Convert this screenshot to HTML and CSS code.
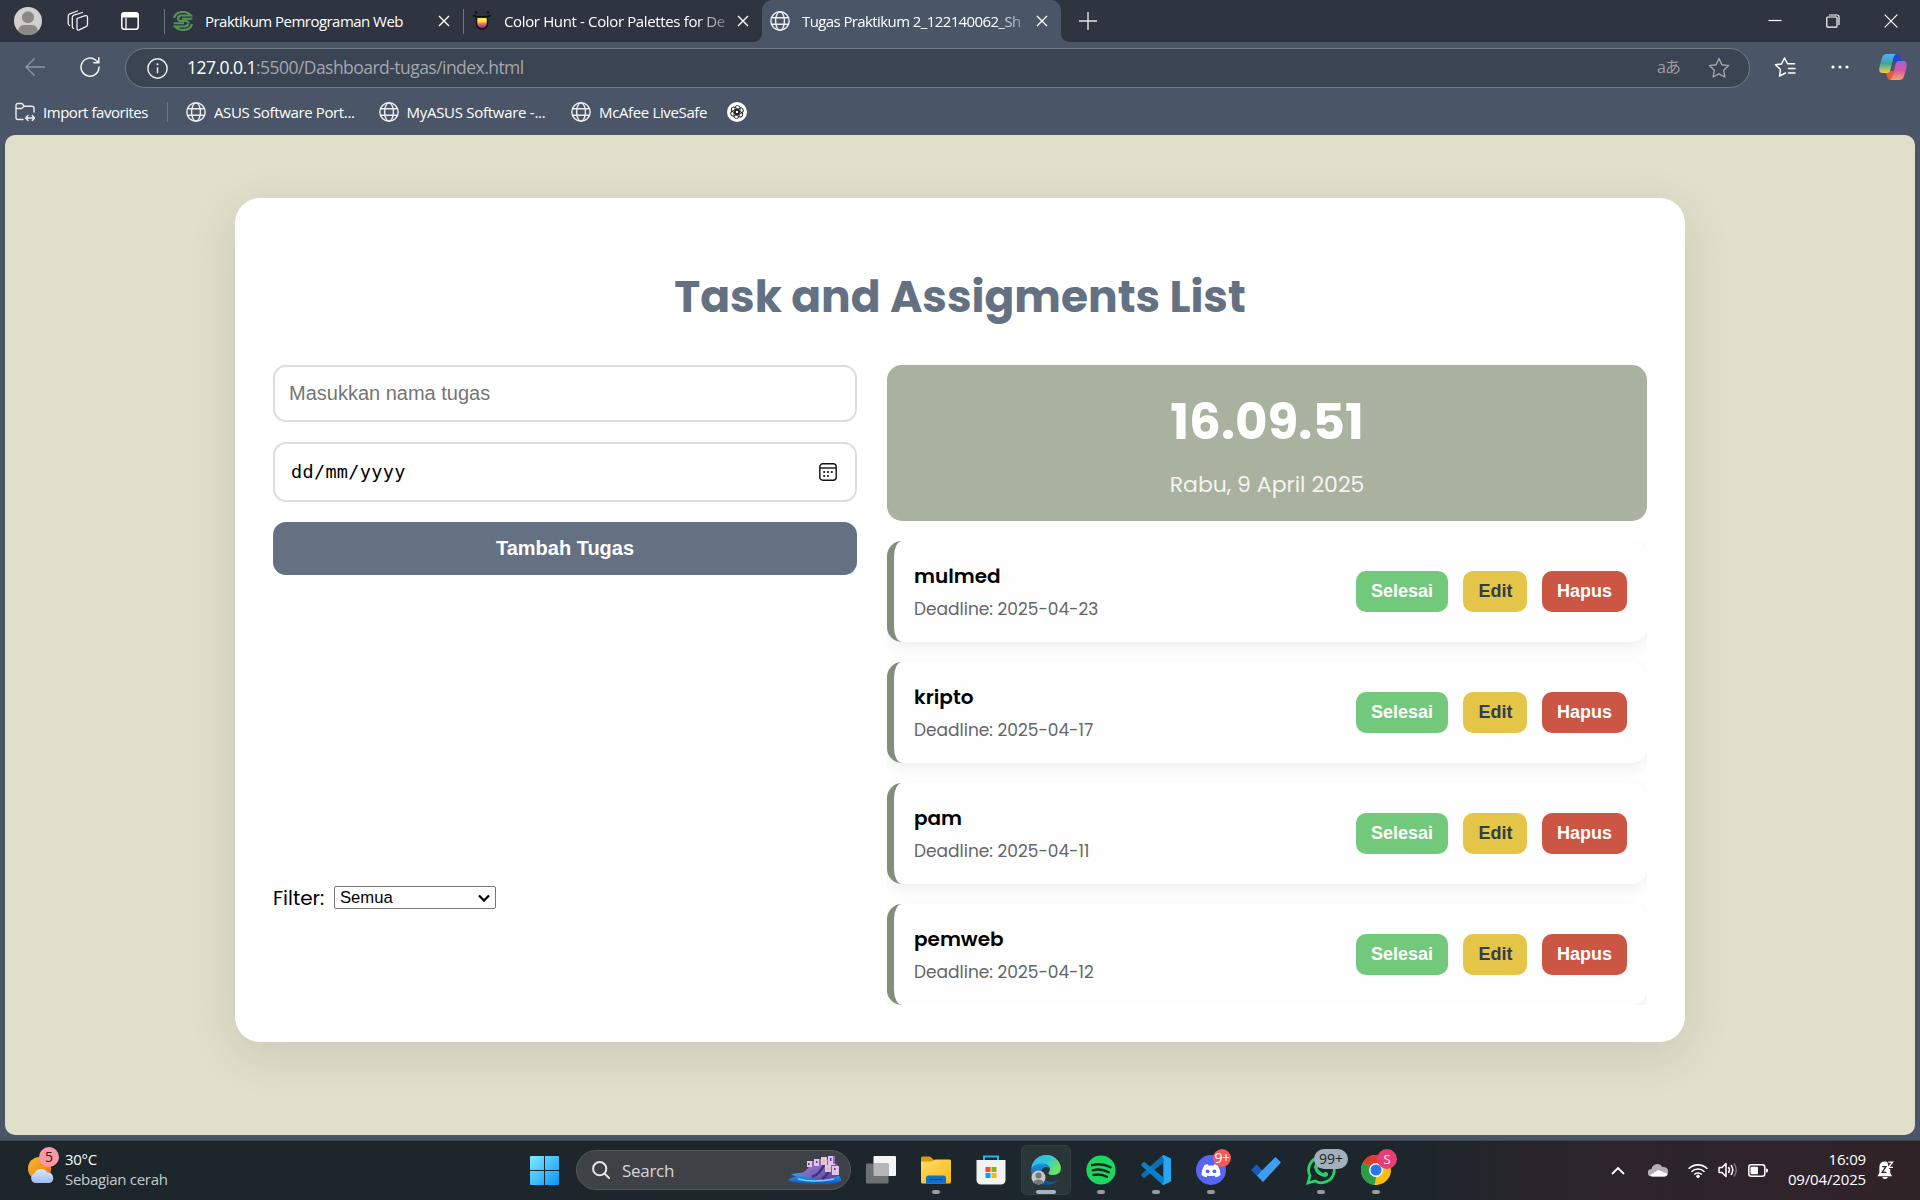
FILE: index.html
```html
<!DOCTYPE html>
<html lang="id">
<head>
<meta charset="utf-8">
<title>Tugas Praktikum 2_122140062_Sh</title>
<link rel="stylesheet" href="styles.css">
</head>
<body>
<svg class="defs" width="0" height="0" aria-hidden="true">
  <defs>
    <symbol id="globe" viewBox="0 0 20 20"><g fill="none" stroke="currentColor" stroke-width="1.4"><circle cx="10" cy="10" r="9.2"/><ellipse cx="10" cy="10" rx="4.4" ry="9.2"/><path d="M1.5 6.8h17M1.5 13.2h17"/></g></symbol>
    <symbol id="x" viewBox="0 0 12 12"><path d="M1 1l10 10M11 1L1 11" fill="none" stroke="currentColor" stroke-width="1.4"/></symbol>
    <linearGradient id="gWin" x1="0" y1="0" x2="1" y2="1"><stop offset="0" stop-color="#7cecff"/><stop offset="1" stop-color="#0a93fb"/></linearGradient>
    <linearGradient id="gSun" x1="0" y1="0" x2="1" y2="1"><stop offset="0" stop-color="#f5c12e"/><stop offset="1" stop-color="#f06a16"/></linearGradient>
    <linearGradient id="gCloud" x1="0" y1="0" x2="0" y2="1"><stop offset="0" stop-color="#d9e8fb"/><stop offset="1" stop-color="#9cbcf2"/></linearGradient>
    <linearGradient id="gFold" x1="0" y1="0" x2="1" y2="1"><stop offset="0" stop-color="#ffdc6b"/><stop offset="1" stop-color="#fbb813"/></linearGradient>
    <linearGradient id="gEdge" x1="0" y1="0" x2="1" y2=".5"><stop offset="0" stop-color="#35b8e8"/><stop offset=".5" stop-color="#2fc6d8"/><stop offset="1" stop-color="#6fe45f"/></linearGradient>
    <linearGradient id="gEdge2" x1="0" y1="0" x2="0" y2="1"><stop offset="0" stop-color="#1c93dd"/><stop offset="1" stop-color="#0f4f9e"/></linearGradient>
    <linearGradient id="gCopA" x1="0" y1="0" x2="0" y2="1"><stop offset="0" stop-color="#4fb0f5"/><stop offset=".5" stop-color="#3fa5a0"/><stop offset="1" stop-color="#f0cf3a"/></linearGradient>
    <linearGradient id="gCopB" x1="0" y1="0" x2="0" y2="1"><stop offset="0" stop-color="#a05ae8"/><stop offset=".5" stop-color="#d9589c"/><stop offset="1" stop-color="#f5a565"/></linearGradient>
    <linearGradient id="gHunt" x1="0" y1="0" x2="0" y2="1"><stop offset=".45" stop-color="#fbe74f"/><stop offset=".46" stop-color="#f7a34b"/><stop offset=".6" stop-color="#f0655f"/><stop offset=".85" stop-color="#7b3fa0"/></linearGradient>
    <linearGradient id="gSea" x1="0" y1="0" x2="0" y2="1"><stop offset="0" stop-color="#35a4f2"/><stop offset="1" stop-color="#1253c4"/></linearGradient>
    <linearGradient id="gRock" x1="0" y1="0" x2="1" y2="1"><stop offset="0" stop-color="#a58fe0"/><stop offset="1" stop-color="#5b3f9b"/></linearGradient>
  </defs>
</svg>

<header class="tabbar">
  <svg class="avatar" viewBox="0 0 28 28"><circle cx="14" cy="14" r="14" fill="#d2d0ce"/><circle cx="14" cy="10.3" r="6" fill="#8b8987"/><path d="M4.200 24c.3-4 3-6 6-6h7.600c3 0 5.700 2 6 6A14 14 0 0 1 4.200 24z" fill="#8b8987"/></svg>
  <svg class="workspaces" viewBox="0 0 22 22" fill="none" stroke="#eee" stroke-width="1.300" stroke-linejoin="round" stroke-linecap="round"><path d="M10 8.500l7.500-2.700q3-.8 3 1.500v7.200q0 1.500-1.500 2.100l-6.700 3.300q-2.300.9-2.300-1.500z"/><path d="M6.500 18.500q-1.200-.5-1.200-2V7.500q0-1.600 1.500-2.300L15.500 2.500"/><path d="M2.500 15.500q-1.300-.6-1.300-2V6q0-1.500 1.500-2.200L10.500 1"/></svg>
  <svg class="tabmenu" viewBox="0 0 18 18"><rect x=".8" y=".8" width="16.400" height="16.400" rx="2.500" fill="none" stroke="#fff" stroke-width="1.500"/><path d="M1 2.500Q1 1 3 1h12q2 0 2 1.500V5.500H1z" fill="#fff"/><path d="M5 6v11" stroke="#fff" stroke-width="1.300"/></svg>
  <i class="tabsep first"></i>
  <div class="tab tab-a">
    <svg class="fav" viewBox="0 0 20 20" fill="none" stroke="#549459"><path d="M1 7Q2.500 1 10 1q5 0 8 3.500H8.500Q5 4.500 5 7.200T8 10h5q2.500 0 2.500 2.500" stroke-width="2.200"/><path d="M19 13q-1.500 6-9 6-5 0-8-3.500h9.500q3.500 0 3.500-2.700" stroke-width="2.200"/><path d="M19.300 7.700H9M.7 12.300H11" stroke-width="2"/></svg>
    <span class="tabtext t1">Praktikum Pemrograman Web</span>
    <svg class="close"><use href="#x"/></svg>
  </div>
  <i class="tabsep"></i>
  <div class="tab tab-b">
    <svg class="fav" viewBox="0 0 20 20"><path d="M4.500 6h11v6.500a5.500 5.500 0 0 1-11 0z" fill="url(#gHunt)" stroke="#111" stroke-width="1.500"/><path d="M1 4.500Q4 6 10 6t9-1.500" fill="none" stroke="#111" stroke-width="1.500"/><circle cx="4" cy="1.500" r="1.300" fill="#111"/><circle cx="16" cy="1.500" r="1.300" fill="#111"/></svg>
    <span class="tabtext t2">Color Hunt - Color Palettes for De</span>
    <svg class="close"><use href="#x"/></svg>
  </div>
  <div class="tab active">
    <svg class="fav"><use href="#globe"/></svg>
    <span class="tabtext t3">Tugas Praktikum 2_122140062_Sh</span>
    <svg class="close"><use href="#x"/></svg>
  </div>
  <svg class="plus" viewBox="0 0 18 18"><path d="M9 0v18M0 9h18" stroke="#e5e5e5" stroke-width="1.400"/></svg>
  <div class="wincontrols">
    <svg viewBox="0 0 14 14"><path d="M.5 6.500h13" stroke="#fff" stroke-width="1.200"/></svg>
    <svg viewBox="0 0 14 14" fill="none" stroke="#fff" stroke-width="1.200"><rect x=".8" y="3" width="10.200" height="10.200" rx="1"/><path d="M3 1h8q2 0 2 2v8"/></svg>
    <svg viewBox="0 0 14 14"><path d="M.7.7l12.600 12.600M13.300.7L.7 13.300" stroke="#fff" stroke-width="1.200"/></svg>
  </div>
</header>

<nav class="toolbar">
  <svg class="back" viewBox="0 0 20 20" fill="none" stroke="#8d95a2" stroke-width="1.400"><path d="M20 10H1M9.500 1.500L1 10l8.500 8.500"/></svg>
  <svg class="reload" viewBox="0 0 20 20" fill="none" stroke="#f3f3f3" stroke-width="1.500" stroke-linecap="round"><path d="M19 10A9 9 0 1 1 15.500 3L18.500 5.500M18.800.8v5h-5"/></svg>
  <div class="address">
    <svg class="info" viewBox="0 0 20 20"><circle cx="10" cy="10" r="9.200" fill="none" stroke="#eee" stroke-width="1.400"/><path d="M10 8.800v5.700" stroke="#eee" stroke-width="1.400"/><circle cx="10" cy="6" r="1" fill="#eee"/></svg>
    <span class="url"><b>127.0.0.1</b>:5500/Dashboard-tugas/index.html</span>
    <span class="translate">aあ</span>
    <svg class="star" viewBox="0 0 22 22"><path d="M11 1.500l2.900 6.200 6.700.9-4.900 4.700 1.200 6.700L11 16.800 5.100 20l1.200-6.700L1.400 8.600l6.700-.9z" fill="none" stroke="#a5a5a5" stroke-width="1.400" stroke-linejoin="round"/></svg>
  </div>
  <svg class="favs" viewBox="0 0 22 22" fill="none" stroke="#fff" stroke-width="1.500" stroke-linejoin="round" stroke-linecap="round"><path d="M11.500 17L5.500 20l1-6.500L1.500 8.800l6-.9L10.500 2l3 5.700h7M14.500 12.500h6.500M14.500 17h6.500"/></svg>
  <svg class="dots" viewBox="0 0 18 4" fill="#fff"><circle cx="2" cy="2" r="1.600"/><circle cx="9" cy="2" r="1.600"/><circle cx="16" cy="2" r="1.600"/></svg>
  <svg class="copilot" viewBox="0 0 28 28"><path d="M14 1h4q2.500 0 3.500 4l1 3.500h-4q-3.500 0-4.500 4z" fill="#2447cf"/><path d="M6 18h9l-2 9h-1.500q-2.500 0-3.300-3.500z" fill="#ea5a35"/><path d="M8 1h9q-2 1-2.700 4L11.500 16.500Q10.700 20 8 20H3.500Q-.5 20 .3 14.500L3 4.800Q4 1 8 1z" fill="url(#gCopA)"/><path d="M20 27h-9q2-1 2.700-4L16.500 11.500Q17.300 8 20 8h4.500q4 0 3.200 5.500L25 23.200Q24 27 20 27z" fill="url(#gCopB)"/></svg>
</nav>

<nav class="bookmarks">
  <svg class="import" viewBox="0 0 20 20" fill="none" stroke="#eee" stroke-width="1.400" stroke-linecap="round" stroke-linejoin="round"><path d="M8 17.500H3Q1 17.500 1 15.500V3.500Q1 1.500 3 1.500h4l2.300 2.700H17q2 0 2 2V10M1 6.500h5.500L9.300 4.200M11 16h8.500M13 13.500L10.700 16l2.300 2.500M17.300 13.500l2.200 2.500-2.200 2.500"/></svg>
  <span class="bm b0">Import favorites</span><i></i>
  <svg><use href="#globe"/></svg><span class="bm b1">ASUS Software Port...</span>
  <svg><use href="#globe"/></svg><span class="bm b2">MyASUS Software -...</span>
  <svg><use href="#globe"/></svg><span class="bm b3">McAfee LiveSafe</span>
  <svg viewBox="0 0 20 20"><circle cx="10" cy="10" r="10" fill="#fff"/><g fill="none" stroke="#222" stroke-width=".9"><rect x="8" y="3.500" width="5" height="8.500" rx="2.500"/><rect x="8" y="3.500" width="5" height="8.500" rx="2.500" transform="rotate(60 10 10)"/><rect x="8" y="3.500" width="5" height="8.500" rx="2.500" transform="rotate(120 10 10)"/><rect x="8" y="3.500" width="5" height="8.500" rx="2.500" transform="rotate(180 10 10)"/><rect x="8" y="3.500" width="5" height="8.500" rx="2.500" transform="rotate(240 10 10)"/><rect x="8" y="3.500" width="5" height="8.500" rx="2.500" transform="rotate(300 10 10)"/></g></svg>
</nav>

<main class="page">
  <section class="card">
    <h1>Task and Assigments List</h1>
    <div class="columns">
      <div class="left">
        <div class="field name">Masukkan nama tugas</div>
        <div class="field date"><span>dd/mm/yyyy</span>
          <svg viewBox="0 0 18 18"><rect x=".8" y=".8" width="16.400" height="16.400" rx="3" fill="none" stroke="#111" stroke-width="1.400"/><path d="M1 5h16" stroke="#111" stroke-width="1.400"/><g fill="#111"><circle cx="5.200" cy="9" r="1.100"/><circle cx="9" cy="9" r="1.100"/><circle cx="12.800" cy="9" r="1.100"/><circle cx="5.200" cy="13" r="1.100"/><circle cx="9" cy="13" r="1.100"/></g></svg>
        </div>
        <button class="add">Tambah Tugas</button>
        <div class="filter"><label>Filter:</label><div class="select">Semua<svg viewBox="0 0 12 8"><path d="M1 1.500l5 5 5-5" fill="none" stroke="#000" stroke-width="2.200"/></svg></div></div>
      </div>
      <div class="right">
        <div class="clock"><div class="time">16.09.51</div><div class="day">Rabu, 9 April 2025</div></div>
        <div class="tasks">
          <article class="task"><div><h2>mulmed</h2><p>Deadline: 2025-04-23</p></div><button class="done">Selesai</button><button class="edit">Edit</button><button class="del">Hapus</button></article>
          <article class="task"><div><h2>kripto</h2><p>Deadline: 2025-04-17</p></div><button class="done">Selesai</button><button class="edit">Edit</button><button class="del">Hapus</button></article>
          <article class="task"><div><h2>pam</h2><p>Deadline: 2025-04-11</p></div><button class="done">Selesai</button><button class="edit">Edit</button><button class="del">Hapus</button></article>
          <article class="task"><div><h2>pemweb</h2><p>Deadline: 2025-04-12</p></div><button class="done">Selesai</button><button class="edit">Edit</button><button class="del">Hapus</button></article>
        </div>
      </div>
    </div>
  </section>
</main>

<footer class="taskbar">
  <div class="weather">
    <div class="wicon">
      <svg viewBox="0 0 28 28"><circle cx="12" cy="12.500" r="12" fill="url(#gSun)"/><path d="M7 27.500a5 5 0 0 1-.5-9.500A7.500 7.500 0 0 1 20 16.500a5.700 5.700 0 0 1 2.500 11z" fill="url(#gCloud)"/></svg>
      <span class="badge">5</span>
    </div>
    <div class="wtext"><span>30°C</span><span class="dim">Sebagian cerah</span></div>
  </div>
  <div class="apps">
    <svg class="start" viewBox="0 0 29 29" fill="url(#gWin)"><path d="M0 1q0-1 1-1h13v14H0zM15 0h13q1 0 1 1v13H15zM0 15h14v14H1q-1 0-1-1zM15 15h14v13q0 1-1 1H15z"/></svg>
    <div class="search">
      <svg class="mag" viewBox="0 0 18 18" fill="none" stroke="#e4e4e4" stroke-width="2" stroke-linecap="round"><circle cx="7.700" cy="7.700" r="6.600"/><path d="M12.500 12.500L17 17"/></svg>
      <span>Search</span>
      <svg class="city" viewBox="0 0 54 28"><path d="M0 24q3-3 8-3l-5-3q12-2 24-1l24 3q3 3 2 5-8 4-26 3Q8 28 0 24z" fill="url(#gSea)"/><path d="M10 18q9-2 12-9l8-4 12-2 8 6v11l-8 3H28q-2-3-7-2z" fill="url(#gRock)"/><path d="M24 21q8-3 12-12M34 23q5-3 8-10" stroke="#45307c" stroke-width="2.500" fill="none"/><g fill="#e0c3e8"><path d="M19 5h6v6h-6zM26 3h6v7h-6zM33 1h6v8h-6zM40 0h7v9h-7zM37 9h6v7h-6zM44 10h7v9h-7z"/></g><g fill="#8f6ac2"><path d="M24 5h2v6h-2zM31 3h2v7h-2zM45 0h2v8h-2z"/></g><g fill="#5a3a98"><path d="M20 7h1.500v2H20zM28 5h1.500v2H28zM42 2h1.500v3H42zM46 12h1.500v2H46z"/></g><g fill="#f6c469"><path d="M35 4h2v3h-2zM39 11h2v3h-2zM47 15h2v2h-2z"/></g><path d="M10 23q15 4 36 0" stroke="#73d2fb" fill="none" stroke-width="1.500"/></svg>
    </div>
    <div class="app"><svg viewBox="0 0 30 30"><rect x="7.500" y="1" width="22.500" height="20" rx="1" fill="#f4f4f4"/><rect x="0" y="8.500" width="22.500" height="20" rx="1" fill="#6f7072"/><path d="M7.500 8.500h15V21H8.500q-1 0-1-1z" fill="#b5b6b7"/></svg></div>
    <div class="app run"><svg viewBox="0 0 30 30"><path d="M0 3q0-1.500 1.500-1.500H9L13 5v6H0z" fill="#d89a0a"/><path d="M0 6.500h11L14 4.500h14.500q1.500 0 1.500 1.500v21q0 1.500-1.500 1.500h-27Q0 28.500 0 27z" fill="url(#gFold)"/><path d="M5 28.500V23q0-2.500 2.500-2.500h15q2.500 0 2.500 2.500v5.500z" fill="#0c72c6"/><path d="M8.500 24.500h13" stroke="#07488c" stroke-width="1.200"/></svg></div>
    <div class="app"><svg viewBox="0 0 30 30"><path d="M8 7V1.500h14V7" fill="none" stroke="#26b4ee" stroke-width="2"/><path d="M.5 5h29v19.500q0 5-5 5h-19q-5 0-5-5z" fill="#f2f2f2"/><path d="M9.500 12h5v5h-5z" fill="#f25022"/><path d="M15.500 12h5v5h-5z" fill="#7fba00"/><path d="M9.500 18h5v5h-5z" fill="#00a4ef"/><path d="M15.500 18h5v5h-5z" fill="#ffb900"/></svg></div>
    <div class="app run current"><svg viewBox="0 0 30 30"><path d="M.2 14A15 15 0 0 1 30 12.500Q30 20 22 20q-5 0-4.500-2.500 1.500-1.500 1.500-3.500Q18 9 12 9 4 9 .2 14z" fill="url(#gEdge)"/><path d="M0 15Q3 8 11 8.500q7 .5 8 5.500-1-2-4-2-5 .5-5 6.500 1 8 10 8.500 4 0 7.500-2.500Q23 30 15 30 0 29 0 15z" fill="url(#gEdge2)"/><circle cx="7.500" cy="22.500" r="7" fill="#c6c6c6"/><circle cx="7.500" cy="20.500" r="3" fill="#777"/><path d="M2.500 27q1-2.500 5-2.500t5 2.500q-2 2.500-5 2.500t-5-2.500z" fill="#777"/></svg></div>
    <div class="app run"><svg viewBox="0 0 30 30"><circle cx="15" cy="15" r="14.600" fill="#1ed760"/><path d="M6 10.200q9.500-2.500 18.500 2M6.800 15.300q8.500-2.200 16 2M7.500 20q7-1.700 13.500 1.800" fill="none" stroke="#14251c" stroke-width="2.400" stroke-linecap="round"/></svg></div>
    <div class="app run"><svg viewBox="0 0 30 30"><path d="M22 0v8L4 22.500q-1 .8-2 0L.7 21q-1-1 0-2z" fill="#0a6fb8"/><path d="M22 30v-8L4 7.500q-1-.8-2 0L.7 9q-1 1 0 2z" fill="#0a7fcb"/><path d="M22.500 0L30 3.500v23L22.500 30q-1 0-1.500-1l1.300-1.500V3L21 1z" fill="#27a7f2"/></svg></div>
    <div class="app run"><svg viewBox="0 0 30 30"><circle cx="15" cy="15" r="15" fill="#5865f2"/><path d="M11.500 9l-3 1q-3 4.500-3 10 2 2 5 2.300l1-1.800q3.500 1 7 0l1 1.800q3-.3 5-2.300 0-5.500-3-10l-3-1-.8 1.500h-5.400z" fill="#fff"/><circle cx="11.600" cy="16.300" r="1.900" fill="#5865f2"/><circle cx="18.400" cy="16.300" r="1.900" fill="#5865f2"/></svg><span class="badge red">9+</span></div>
    <div class="app"><svg viewBox="0 0 30 30"><path d="M0 15l5.500-5.500 9 9L12 27z" fill="#195abd"/><path d="M6 20.500L24.500 2 30 7.500 12 27z" fill="#3f9cf0"/></svg></div>
    <div class="app run"><svg viewBox="0 0 30 30"><path d="M2 28l2-7.300A12.800 12.800 0 1 1 9 26z" fill="none" stroke="#25d366" stroke-width="2.800"/><path d="M9.500 8.500q1.500-1.500 2.500 0l1 2.500q0 1-1.500 2.300 2 3.700 5.700 5 1.500-1.800 2.300-1.500l2.500 1.500q1 3-3 3.800Q10 21 8 12.500 8 10 9.500 8.500z" fill="#25d366"/></svg><span class="badge grey">99+</span></div>
    <div class="app run"><svg viewBox="0 0 30 30"><circle cx="15" cy="15" r="15" fill="#f9bf10"/><path d="M15 15L2 7.500a15 15 0 0 1 26 0z" fill="#e23a2e"/><path d="M15 15l1 15A15 15 0 0 1 2 7.500z" fill="#2c9c4b"/><path d="M15 22l-1.500 8h3l5-8z" fill="#f9bf10"/><circle cx="15" cy="15" r="7" fill="#fff"/><circle cx="15" cy="15" r="5.600" fill="#2678e8"/></svg><span class="badge pink">S</span></div>
  </div>
  <div class="tray">
    <svg class="chev" viewBox="0 0 14 9"><path d="M1 8l6-6 6 6" fill="none" stroke="#fff" stroke-width="1.800"/></svg>
    <svg class="cloud" viewBox="0 0 20 14"><path d="M3.500 13.500a3.500 3.500 0 0 1 0-7.500A6 6 0 0 1 14.500 4a4.800 4.800 0 0 1 2 9.500z" fill="#b3aeb1"/><path d="M4 13.500L2 12l8.500-5 9 4q-.5 2.500-3 2.500z" fill="#fff"/></svg>
    <svg class="wifi" viewBox="0 0 20 15" fill="none" stroke="#fff" stroke-width="1.600"><path d="M.7 5.700a13.200 13.200 0 0 1 18.600 0M3.500 8.700a9.200 9.200 0 0 1 13 0M6.200 11.500a5.400 5.400 0 0 1 7.600 0"/><circle cx="10" cy="13.300" r="1.700" fill="#fff" stroke="none"/></svg>
    <svg class="vol" viewBox="0 0 20 16" fill="none" stroke="#fff" stroke-width="1.500" stroke-linejoin="round"><path d="M1 5.500h3L8 1.500v13L4 10.500H1zM10.500 5q2 3 0 6M13 3q3.500 5 0 10"/><path d="M16 1.500q4.500 6.500 0 13" stroke="#807578"/></svg>
    <svg class="batt" viewBox="0 0 20 13"><rect x=".8" y=".8" width="16" height="11.400" rx="2.500" fill="none" stroke="#fff" stroke-width="1.500"/><rect x="2.500" y="2.700" width="7.500" height="7.600" rx="1" fill="#fff"/><path d="M18 4.500h.5q1.500 0 1.500 2t-1.500 2H18z" fill="#fff"/></svg>
    <div class="datetime"><span>16:09</span><span>09/04/2025</span></div>
    <svg class="bell" viewBox="0 0 18 20"><path d="M8.500 1Q14 1 14 7v6l2 3.500H.5L2.500 13V7Q2.500 1 8.500 1zM5.500 17.500h6q-.5 2-3 2t-3-2z" fill="#fff"/><path d="M10.500 0h7.500v9h-5z" fill="#302328"/><path d="M5.500 6.500h4L5.500 12.500h4.500" fill="none" stroke="#302328" stroke-width="1.400"/><path d="M12 1.700h4.500L12.300 7.300H17" fill="none" stroke="#fff" stroke-width="1.400"/></svg>
  </div>
</footer>
</body>
</html>
```
FILE: styles.css
```css
* { box-sizing: border-box; }
body { margin: 0; width: 1920px; height: 1200px; overflow: hidden; display: flex; flex-direction: column; background: #4a5567; color: #fff; font-family: "Open Sans", "Noto Sans", sans-serif; }
svg { display: block; flex: none; }
.defs { position: absolute; }
h1, h2, p { margin: 0; }
button { border: 0; padding: 0; font-family: "Liberation Sans", Arial, sans-serif; font-weight: 700; }

/* browser tab strip */
.tabbar { height: 42px; flex: none; background: #2e3440; display: flex; align-items: center; padding-left: 14px; }
.avatar { width: 28px; height: 28px; }
.workspaces { width: 22px; height: 22px; margin-left: 25px; }
.tabmenu { width: 18px; height: 18px; margin-left: 32px; }
.tabsep { width: 1px; height: 25px; background: #6d7480; }
.tabsep.first { margin-left: 25px; }
.tab { height: 42px; display: flex; align-items: center; }
.tab-a { width: 298px; padding: 0 13px 0 8px; }
.tab-b { width: 298px; padding: 0 13px 0 8px; }
.tab.active { width: 299px; background: #4a5567; border-radius: 10px 10px 0 0; padding: 0 13px 0 8px; position: relative; }
.tab.active::before, .tab.active::after { content: ""; position: absolute; bottom: 0; width: 8px; height: 8px; }
.tab.active::before { left: -8px; background: radial-gradient(circle at 0 0, transparent 7.5px, #4a5567 8px); }
.tab.active::after { right: -8px; background: radial-gradient(circle at 100% 0, transparent 7.5px, #4a5567 8px); }
.fav { width: 20px; height: 20px; margin-right: 12px; color: #eee; }
.tabtext { flex: 1; font-size: 15px; line-height: 20px; white-space: nowrap; padding-bottom: 1px; }
.t1 { letter-spacing: -.53px; }
.t2 { letter-spacing: -.36px; margin-right: 8px; }
.t3 { letter-spacing: -.6px; margin-right: 8px; }
.t2, .t3 { -webkit-mask-image: linear-gradient(90deg, #000 86%, transparent 104%); }
.close { width: 12px; height: 12px; }
.plus { width: 18px; height: 18px; margin-left: 18px; }
.wincontrols { margin-left: auto; display: flex; gap: 44px; padding-right: 22px; }
.wincontrols svg { width: 14px; height: 14px; }

/* address bar row */
.toolbar { height: 50px; flex: none; display: flex; align-items: center; padding-left: 25px; }
.back, .reload { width: 20px; height: 20px; }
.reload { margin-left: 35px; }
.address { width: 1625px; height: 40px; margin-left: 25px; margin-top: 2px; border: 1px solid #727a86; border-radius: 20px; background: #3b4453; display: flex; align-items: center; padding: 0 19px 0 21px; }
.info { width: 21px; height: 21px; margin-right: 19px; }
.url { flex: 1; font-size: 17.500px; letter-spacing: -.54px; color: #a3a7ad; padding-bottom: 2px; }
.url b { font-weight: 400; color: #fff; }
.translate { font: 16px "Open Sans", "Noto Sans CJK JP", sans-serif; color: #9b9da1; margin-right: 28px; letter-spacing: -1px; padding-bottom: 4px; }
.star { width: 22px; height: 22px; }
.favs { width: 22px; height: 22px; margin-left: 24px; }
.dots { width: 18px; height: 4px; margin-left: 35px; }
.copilot { width: 28px; height: 28px; margin-left: 30px; }

/* bookmarks */
.bookmarks { height: 43px; flex: none; display: flex; align-items: center; padding: 0 0 3px 15px; }
.bookmarks svg { width: 20px; height: 20px; margin-right: 8px; color: #eee; }
.bookmarks i { width: 1px; height: 20px; background: #6f7886; margin-right: 18px; }
.bm { font-size: 15px; white-space: nowrap; letter-spacing: -.36px; padding-bottom: 1px; }
.b0 { width: 124px; letter-spacing: -.46px; }
.b1, .b2 { width: 164.500px; }
.b2 { letter-spacing: -.28px; }
.b3 { width: 128px; }

/* web page */
.page { height: 1000px; margin: 0 5px; flex: none; border-radius: 10px; background: #e0dfca; padding: 63px 0 0 230px; overflow: hidden; }
.card { width: 1450px; height: 844px; background: #fff; border-radius: 25px; padding: 63px 38px 37px; box-shadow: 0 12px 50px rgba(0,0,0,.1); display: flex; flex-direction: column; color: #000; font-family: Poppins, Inter, "Open Sans", sans-serif; }
h1 { height: 104px; line-height: 71px; text-align: center; font-size: 44px; font-weight: 700; color: #637182; }
.columns { flex: 1; display: flex; gap: 30px; }
.left { width: 584px; display: flex; flex-direction: column; }
.field { border: 2px solid #ddd; border-radius: 13px; display: flex; align-items: center; padding: 0 18px 0 14px; background: #fff; font-size: 20px; }
.name { height: 57px; color: #757575; font-family: "Liberation Sans", Arial, sans-serif; padding-bottom: 1px; }
.date { height: 60px; margin-top: 20px; font-family: "DejaVu Sans Mono", monospace; justify-content: space-between; }
.date span { font-size: 18.500px; letter-spacing: .33px; padding: 0 0 1px 2px; }
.date svg { width: 18px; height: 18px; }
.add { height: 53px; margin-top: 20px; border-radius: 13px; background: #637182; color: #fff; font-size: 20px; padding-bottom: 1px; }
.filter { margin-top: 308px; display: flex; align-items: center; gap: 10px; height: 29px; }
.filter label { width: 51px; font-size: 20px; white-space: nowrap; }
.select { width: 162px; height: 23px; border: 1px solid #767676; border-radius: 2px; display: flex; align-items: center; justify-content: space-between; padding: 0 5px; font: 16.670px "Liberation Sans", Arial, sans-serif; }
.select svg { width: 12px; height: 8px; }
.right { width: 760px; display: flex; flex-direction: column; gap: 20px; }
.clock { height: 156px; border-radius: 15px; background: #a9b19f; color: #fff; text-align: center; display: flex; flex-direction: column; padding-top: 23px; }
.time { font-size: 50px; line-height: 68px; font-weight: 700; }
.day { margin-top: 13px; font-size: 22px; line-height: 32px; color: #f3f4f1; }
.tasks { height: 464px; overflow: hidden; display: flex; flex-direction: column; gap: 20px; }
.task { height: 101px; flex: none; border-left: 7px solid #848c7a; border-radius: 15px; background: #fefefe; box-shadow: 0 5px 15px rgba(0,0,0,.07); display: flex; align-items: center; gap: 15px; padding: 0 20px; }
.task div { flex: 1; }
.task h2 { font-size: 20px; line-height: 30px; font-weight: 600; }
.task p { font-size: 17px; line-height: 26px; margin-top: 5px; color: #666; }
.task button { height: 41px; border-radius: 10px; font-size: 18px; color: #fff; }
.task .done { width: 92px; background: #72c97c; }
.task .edit { width: 64px; background: #e4c548; color: #333d4b; padding-left: 1px; }
.task .del { width: 85px; background: #cc5644; }

/* taskbar */
.taskbar { height: 60px; margin-top: 5px; flex: none; border-top: 1px solid #3f474f; display: flex; align-items: center; background: linear-gradient(90deg, #1c262b 0, #1d262c 74%, #2c252b 82%, #302328 100%); padding: 0 0 1px 28px; }
.weather { display: flex; width: 502px; gap: 10px; }
.wicon { position: relative; width: 27px; height: 28px; align-self: center; }
.wicon svg { width: 27px; height: 28px; }
.badge { position: absolute; left: 11px; top: -9px; width: 20px; height: 20px; border-radius: 10px; background: #ff98a4; color: #222; font-size: 14px; line-height: 20px; text-align: center; }
.wtext { display: flex; flex-direction: column; font-size: 15px; line-height: 20px; letter-spacing: -.3px; padding-bottom: 2px; }
.dim { color: #c7cacb; }
.apps { display: flex; align-items: center; }
.start { width: 29px; height: 29px; }
.search { margin: 0 2px 0 17px; width: 275px; height: 40px; border-radius: 20px; background: #3e4246; border: 1px solid #54585c; display: flex; align-items: center; padding: 0 8px 0 15px; }
.mag { width: 18px; height: 18px; }
.search span { flex: 1; margin-left: 12px; font-size: 17px; color: #d5d6d7; letter-spacing: -.3px; }
.city { width: 54px; height: 28px; }
.app { position: relative; width: 50px; height: 50px; margin-left: 5px; display: grid; place-items: center; border-radius: 6px; }
.app:nth-of-type(2) { margin-left: 3px; }
.app svg { width: 30px; height: 30px; }
.current { background: #2b363b; border: 1px solid #343f44; }
.run::after { content: ""; position: absolute; bottom: 1px; width: 8px; height: 4px; border-radius: 2px; background: #969a9d; }
.current::after { width: 20px; bottom: 0; background: #a3b3bf; }
.red { left: 27px; top: 4px; background: #f1595b; color: #fff; width: 18px; height: 18px; line-height: 18px; letter-spacing: -.5px; }
.grey { left: 18px; top: 4px; width: 34px; background: #a1b0ba; color: #1c262b; }
.pink { left: 26px; top: 4px; background: #e83e77; color: #fff; font-size: 13px; }
.tray { margin-left: auto; display: flex; align-items: center; padding-right: 26px; }
.chev { width: 14px; height: 9px; margin-right: 23px; }
.cloud { width: 20px; height: 14px; margin-right: 20px; }
.wifi { width: 20px; height: 15px; margin-right: 10px; }
.vol { width: 20px; height: 16px; margin-right: 10px; }
.batt { width: 20px; height: 13px; }
.datetime { width: 98px; margin-right: 11px; text-align: right; display: flex; flex-direction: column; font-size: 15px; line-height: 20px; letter-spacing: -.15px; padding-bottom: 2px; }
.bell { width: 17px; height: 20px; }
```
